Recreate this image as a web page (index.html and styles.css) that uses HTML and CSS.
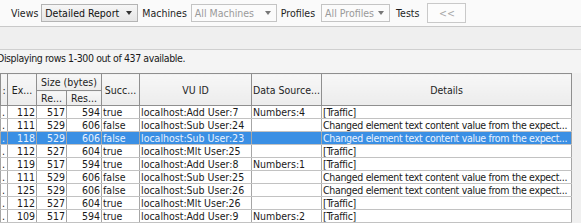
FILE: index.html
```html
<!DOCTYPE html>
<html>
<head>
<meta charset="utf-8">
<link rel="stylesheet" href="styles.css">
</head>
<body>
<div class="toolbar">
  <span class="lbl lbl-views">Views</span>
  <div class="sel sel-views"><span class="val">Detailed Report</span><span class="arrow"></span></div>
  <span class="lbl lbl-mach">Machines</span>
  <div class="sel sel-mach dis"><span class="val">All Machines</span><span class="arrow"></span></div>
  <span class="lbl lbl-prof">Profiles</span>
  <div class="sel sel-prof dis"><span class="val">All Profiles</span><span class="arrow"></span></div>
  <span class="lbl lbl-tests">Tests</span>
  <div class="btn">&lt;&lt;</div>
</div>
<div class="band"></div>
<div class="status">Displaying rows 1-300 out of 437 available.</div>
<div class="tablewrap">
<table class="grid">
  <colgroup>
    <col class="c0"><col class="c1"><col class="c2"><col class="c3"><col class="c4"><col class="c5"><col class="c6"><col class="c7">
  </colgroup>
  <thead>
    <tr class="h1">
      <th rowspan="2">:</th>
      <th rowspan="2">Ex...</th>
      <th colspan="2">Size (bytes)</th>
      <th rowspan="2">Succ...</th>
      <th rowspan="2">VU ID</th>
      <th rowspan="2">Data Source...</th>
      <th rowspan="2">Details</th>
    </tr>
    <tr class="h2">
      <th>Re...</th>
      <th>Res...</th>
    </tr>
  </thead>
  <tbody>
    <tr><td>.</td><td class="n">112</td><td class="n">517</td><td class="n">594</td><td>true</td><td>localhost:Add User:7</td><td>Numbers:4</td><td class="det">[Traffic]</td></tr>
    <tr><td>.</td><td class="n">111</td><td class="n">529</td><td class="n">606</td><td>false</td><td>localhost:Sub User:24</td><td></td><td class="det">Changed element text content value from the expect...</td></tr>
    <tr class="selr"><td>.</td><td class="n">118</td><td class="n">529</td><td class="n">606</td><td>false</td><td>localhost:Sub User:23</td><td></td><td class="det">Changed element text content value from the expect...</td></tr>
    <tr><td>.</td><td class="n">112</td><td class="n">527</td><td class="n">604</td><td>true</td><td>localhost:Mlt User:25</td><td></td><td class="det">[Traffic]</td></tr>
    <tr><td>.</td><td class="n">119</td><td class="n">517</td><td class="n">594</td><td>true</td><td>localhost:Add User:8</td><td>Numbers:1</td><td class="det">[Traffic]</td></tr>
    <tr><td>.</td><td class="n">111</td><td class="n">529</td><td class="n">606</td><td>false</td><td>localhost:Sub User:25</td><td></td><td class="det">Changed element text content value from the expect...</td></tr>
    <tr><td>.</td><td class="n">125</td><td class="n">529</td><td class="n">606</td><td>false</td><td>localhost:Sub User:26</td><td></td><td class="det">Changed element text content value from the expect...</td></tr>
    <tr><td>.</td><td class="n">112</td><td class="n">527</td><td class="n">604</td><td>true</td><td>localhost:Mlt User:26</td><td></td><td class="det">[Traffic]</td></tr>
    <tr><td>.</td><td class="n">109</td><td class="n">517</td><td class="n">594</td><td>true</td><td>localhost:Add User:9</td><td>Numbers:2</td><td class="det">[Traffic]</td></tr>
  </tbody>
</table>
</div>
</body>
</html>
```

FILE: styles.css
```css
html, body {
  margin: 0;
  padding: 0;
  background: #f4f4f4;
  font-family: "DejaVu Sans Condensed", "Liberation Sans", sans-serif;
  font-stretch: condensed;
  font-size: 10px;
  color: #1a1a1a;
  overflow: hidden;
}
.toolbar {
  height: 26px;
  background: #fafafa;
  border-bottom: 1px solid #c9c9c9;
  display: flex;
  align-items: center;
  padding-left: 11px;
  white-space: nowrap;
}
.lbl {
  font-size: 10.5px;
  color: #1e1e1e;
  flex: none;
}
.lbl-views { margin-right: 3px; }
.lbl-mach { margin-left: 4px; margin-right: 4px; }
.lbl-prof { margin-left: 4px; margin-right: 6px; }
.lbl-tests { margin-left: 6px; margin-right: 8px; }
.sel {
  flex: none;
  height: 16px;
  border: 1px solid #b4b4b4;
  background: linear-gradient(#f6f6f6, #e6e6e6);
  display: flex;
  align-items: center;
  justify-content: space-between;
  padding: 0 5px 0 3px;
  font-size: 10.5px;
  color: #111;
  white-space: nowrap;
}
.val { white-space: nowrap; }
.sel.dis {
  background: #fbfbfb;
  color: #9a9a9a;
  border-color: #c4c4c4;
}
.sel-views { width: 87px; }
.sel-mach { width: 76px; }
.sel-prof { width: 59px; }
.arrow {
  flex: none;
  width: 0;
  height: 0;
  border-left: 3.5px solid transparent;
  border-right: 3.5px solid transparent;
  border-top: 4px solid #333;
}
.dis .arrow { border-top-color: #777; }
.btn {
  flex: none;
  width: 37px;
  height: 18px;
  border: 1px solid #c9c9c9;
  background: #fcfcfc;
  color: #a8a8a8;
  font-size: 10.5px;
  display: flex;
  align-items: center;
  justify-content: center;
}
.band {
  height: 22px;
  background: #efefef;
  border-bottom: 1px solid #cfcfcf;
}
.status {
  height: 23px;
  line-height: 17px;
  margin-left: -3px;
  font-size: 10.5px;
  letter-spacing: -0.4px;
  color: #1a1a1a;
  white-space: nowrap;
}
.tablewrap {
  width: 581px;
  background: #f0f0f0;
}
.grid {
  table-layout: fixed;
  border-collapse: collapse;
  width: 571px;
  background: #fff;
}
.c0 { width: 7px; }
.c1 { width: 29px; }
.c2 { width: 30px; }
.c3 { width: 35px; }
.c4 { width: 38px; }
.c5 { width: 112px; }
.c6 { width: 70px; }
.c7 { width: 250px; }
th {
  background: linear-gradient(#f7f7f7, #ececec);
  border: 1px solid #8f8f8f;
  font-weight: normal;
  font-size: 10.5px;
  color: #1e1e1e;
  padding: 0;
  white-space: nowrap;
  overflow: hidden;
  text-align: center;
}
.h1 th { height: 16px; }
.h2 th { height: 14px; }
td {
  height: 12px;
  padding: 0 1px;
  border-top: 1px solid #c2c2c2;
  border-bottom: 1px solid #c2c2c2;
  border-left: 1px solid #a6a6a6;
  border-right: 1px solid #a6a6a6;
  white-space: nowrap;
  overflow: hidden;
  line-height: 12px;
  font-size: 10.5px;
}
td.n { text-align: right; }
td.det { letter-spacing: -0.32px; }
tr.selr td {
  background: #3a8fe4;
  color: #e8f2ff;
}
```
